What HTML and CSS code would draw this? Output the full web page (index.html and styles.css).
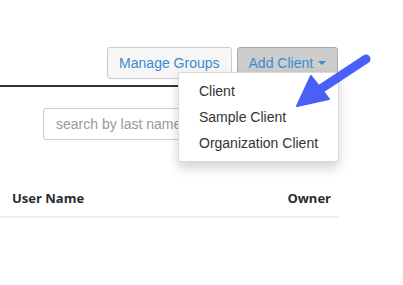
FILE: index.html
```html
<!DOCTYPE html>
<html>
<head>
<meta charset="utf-8">
<link rel="stylesheet" href="styles.css">
</head>
<body>
<div class="page">
  <div class="toolbar">
    <button class="btn">Manage Groups</button>
    <div class="btn-group">
      <button class="btn btn-active">Add Client <span class="caret"></span></button>
      <ul class="dropdown">
        <li>Client</li>
        <li>Sample Client</li>
        <li>Organization Client</li>
      </ul>
    </div>
  </div>
  <div class="rule"></div>
  <div class="search-row">
    <div class="input-group">
      <input class="search" type="text" placeholder="search by last name">
      <span class="search-btn"></span>
    </div>
  </div>
  <div class="thead">
    <span>User Name</span>
    <span>Owner</span>
  </div>
</div>
<svg class="pointer" width="403" height="285" viewBox="0 0 403 285">
  <line x1="366" y1="59" x2="316" y2="92" stroke="#4a5ff6" stroke-width="9" stroke-linecap="round"/>
  <polygon points="297,106 311,76 329,99" fill="#4a5ff6" stroke="#4a5ff6" stroke-width="2" stroke-linejoin="round"/>
</svg>
</body>
</html>
```
FILE: styles.css
```css
html, body { margin: 0; padding: 0; background: #fff; }
body { font-family: "Liberation Sans", Arial, sans-serif; font-size: 14px; color: #333; }
.page { width: 339px; }
.toolbar {
  display: flex;
  justify-content: flex-end;
  gap: 5px;
  padding-top: 47px;
  padding-right: 1px;
}
.btn {
  font-family: "Liberation Sans", Arial, sans-serif;
  font-size: 14px;
  line-height: 20px;
  height: 32px;
  padding: 5px 11px;
  border: 1px solid #ccc;
  border-radius: 3px;
  background: #f6f6f6;
  color: #3a8bcf;
  margin: 0;
}
.btn-active { background: #cdcdcd; border-color: #a9a9a9; }
.caret {
  display: inline-block;
  width: 0; height: 0;
  border-left: 4px solid transparent;
  border-right: 4px solid transparent;
  border-top: 4px solid #3a8bcf;
  vertical-align: middle;
  margin-left: 1px;
  margin-top: -2px;
}
.btn-group { position: relative; }
.dropdown {
  position: absolute;
  right: -1px;
  top: 25px;
  box-sizing: border-box;
  width: 161px;
  margin: 0;
  padding: 5px 0;
  list-style: none;
  background: #fff;
  border: 1px solid rgba(0,0,0,.15);
  border-radius: 3px;
  box-shadow: 0 6px 12px rgba(0,0,0,.175);
  z-index: 10;
  white-space: nowrap;
}
.dropdown li { padding: 3px 20px; line-height: 20px; color: #333; }
.rule { height: 2px; background: #333; margin-top: 6px; }
.search-row { padding: 21px 0 0 43px; }
.input-group { display: flex; }
.search {
  flex: 1;
  height: 32px;
  box-sizing: border-box;
  border: 1px solid #ccc;
  border-radius: 3px 0 0 3px;
  padding: 6px 12px;
  font-family: "Liberation Sans", Arial, sans-serif;
  font-size: 14px;
  color: #555;
  outline: none;
}
.search::placeholder { color: #999; }
.search-btn { width: 40px; height: 30px; background: #1d4f60; border-radius: 0 3px 3px 0; }
.thead {
  display: flex;
  justify-content: space-between;
  margin-top: 49px;
  padding: 0 8px 9px 12px;
  border-bottom: 2px solid #e4eff2;
  font-family: "Open Sans", sans-serif;
  font-weight: 700;
  font-size: 13px;
  line-height: 18px;
  color: #2b2b2b;
}
.pointer { position: absolute; left: 0; top: 0; z-index: 20; pointer-events: none; }
```
